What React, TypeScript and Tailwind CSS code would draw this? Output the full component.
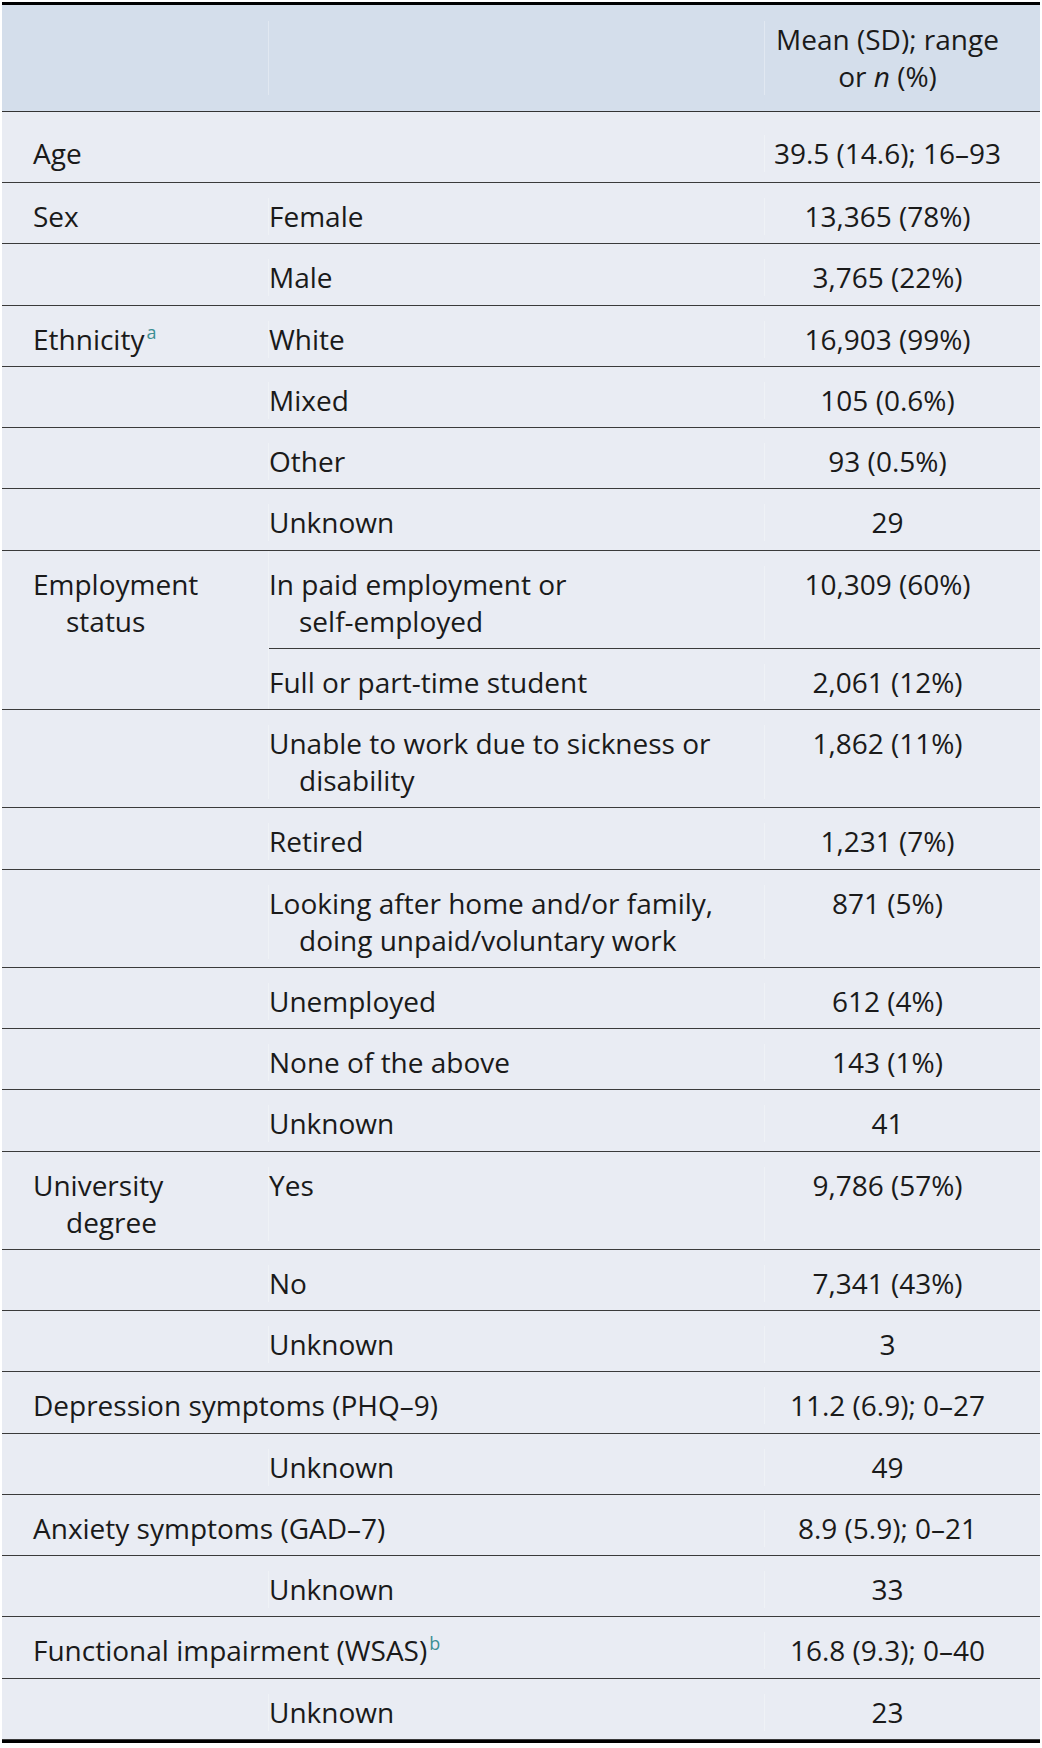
import React from "react";

const font = { fontFamily: '"Open Sans", "Noto Sans", sans-serif' };

type Cell = React.ReactNode;

function C1({ children, span }: { children?: Cell; span?: boolean }) {
  return (
    <div
      className={
        span
          ? "w-[763px] shrink-0 pl-[64px] indent-[-33px] pr-[20px] border-r border-white/30"
          : "w-[267px] shrink-0 pl-[64px] indent-[-33px] border-r border-white/30"
      }
    >
      {children}
    </div>
  );
}

function C2({ children }: { children?: Cell }) {
  return <div className="w-[496px] shrink-0 pl-[30px] indent-[-30px] pr-[32px] border-r border-white/30">{children}</div>;
}

function C3({ children }: { children?: Cell }) {
  return <div className="flex-1 pr-[30px] text-center">{children}</div>;
}

const rowCls = "flex pt-[15px] pb-[8.25px] border-b border-[#3a3a3a]";

function Row({ a, b, c }: { a?: Cell; b?: Cell; c?: Cell }) {
  return (
    <div className={rowCls}>
      <C1>{a}</C1>
      <C2>{b}</C2>
      <C3>{c}</C3>
    </div>
  );
}

function SpanRow({ a, c, extra }: { a: Cell; c: Cell; extra?: string }) {
  return (
    <div className={extra ? `flex border-b border-[#3a3a3a] ${extra}` : rowCls}>
      <C1 span>{a}</C1>
      <C3>{c}</C3>
    </div>
  );
}

function Sup({ children }: { children: string }) {
  return (
    <span className="inline-block indent-0 text-[18px] leading-[18px] align-top relative top-[2px] ml-[2px] text-[#3c8f93]">
      {children}
    </span>
  );
}

export default function App() {
  return (
    <div className="bg-white px-[2px] pt-[2px] pb-[3px]" style={font}>
      <div className="text-[28px] leading-[37px] text-[#1a1a1a] border-t-[3px] border-b-[3px] border-black bg-[#e9ecf3]">
        {/* header */}
        <div className="flex bg-[#d4deeb] pt-[16px] pb-[16px] border-b-[1.5px] border-[#333]">
          <div className="w-[267px] shrink-0 border-r border-white/30" />
          <div className="w-[496px] shrink-0 border-r border-white/30" />
          <div className="flex-1 pr-[30px] text-center">
            Mean (SD); range
            <br />
            or <i>n</i> (%)
          </div>
        </div>

        <SpanRow a="Age" c="39.5 (14.6); 16–93" extra="pt-[22.5px] pb-[10.5px]" />
        <Row a="Sex" b="Female" c="13,365 (78%)" />
        <Row b="Male" c="3,765 (22%)" />
        <Row
          a={
            <>
              Ethnicity<Sup>a</Sup>
            </>
          }
          b="White"
          c="16,903 (99%)"
        />
        <Row b="Mixed" c="105 (0.6%)" />
        <Row b="Other" c="93 (0.5%)" />
        <Row b="Unknown" c="29" />

        {/* Employment group */}
        <div className="flex border-b border-[#3a3a3a]">
          <div className="w-[267px] shrink-0 pl-[64px] indent-[-33px] pt-[15px] border-r border-white/30">
            Employment
            <br />
            status
          </div>
          <div className="flex-1 flex flex-col">
            <div className="flex pt-[15px] pb-[8.25px] border-b border-[#3a3a3a]">
              <C2>
                In paid employment or
                <br />
                self-employed
              </C2>
              <C3>10,309 (60%)</C3>
            </div>
            <div className="flex pt-[15px] pb-[8.25px]">
              <C2>Full or part-time student</C2>
              <C3>2,061 (12%)</C3>
            </div>
          </div>
        </div>
        <Row
          b={
            <>
              Unable to work due to sickness or
              <br />
              disability
            </>
          }
          c="1,862 (11%)"
        />
        <Row b="Retired" c="1,231 (7%)" />
        <Row
          b={
            <>
              Looking after home and/or family,
              <br />
              doing unpaid/voluntary work
            </>
          }
          c="871 (5%)"
        />
        <Row b="Unemployed" c="612 (4%)" />
        <Row b="None of the above" c="143 (1%)" />
        <Row b="Unknown" c="41" />
        <Row
          a={
            <>
              University
              <br />
              degree
            </>
          }
          b="Yes"
          c="9,786 (57%)"
        />
        <Row b="No" c="7,341 (43%)" />
        <Row b="Unknown" c="3" />
        <SpanRow a="Depression symptoms (PHQ–9)" c="11.2 (6.9); 0–27" />
        <Row b="Unknown" c="49" />
        <SpanRow a="Anxiety symptoms (GAD–7)" c="8.9 (5.9); 0–21" />
        <Row b="Unknown" c="33" />
        <SpanRow
          a={
            <>
              Functional impairment (WSAS)<Sup>b</Sup>
            </>
          }
          c="16.8 (9.3); 0–40"
        />
        <Row b="Unknown" c="23" />
      </div>
    </div>
  );
}
